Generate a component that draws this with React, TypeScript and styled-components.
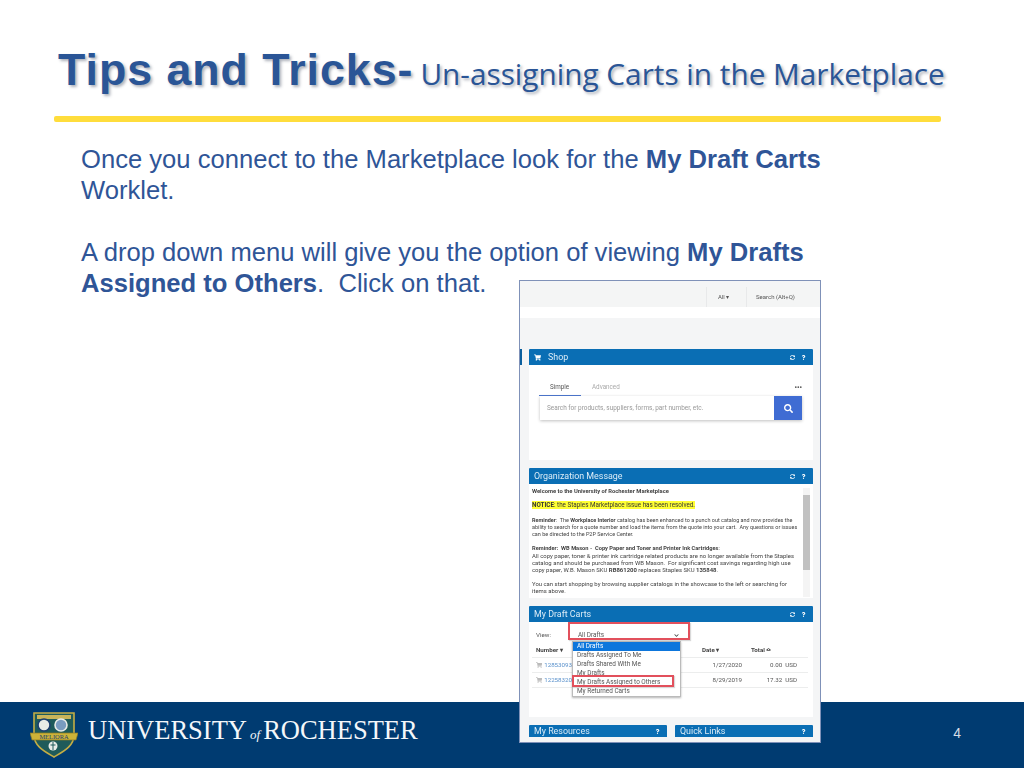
import React from "react";
import styled, { createGlobalStyle } from "styled-components";
import { FaShoppingCart, FaSearch, FaQuestion, FaSyncAlt, FaChevronDown } from "react-icons/fa";

const Global = createGlobalStyle`
  html, body { margin: 0; padding: 0; background: #fff; }
  * { box-sizing: border-box; }
`;

const Slide = styled.div`
  position: relative;
  width: 1024px;
  height: 768px;
  overflow: hidden;
  display: flex;
  flex-direction: column;
  background: #fff;
  font-family: "Liberation Sans", Arial, sans-serif;
`;

const Header = styled.header`
  height: 117px;
  padding: 45px 83px 0 54px;
`;

const TitleRow = styled.div`
  display: flex;
  align-items: baseline;
  height: 50px;
  padding-left: 4px;
  color: #2a5596;
  text-shadow: 2px 2px 3px rgba(60, 70, 90, 0.42);
  white-space: nowrap;
`;

const TitleBold = styled.span`
  font-size: 44.7px;
  letter-spacing: 1px;
  font-weight: 700;
`;

const TitleThin = styled.span`
  font-family: "Open Sans", sans-serif;
  font-size: 29.75px;
  margin-left: 7px;
`;

const Rule = styled.div`
  height: 6px;
  margin-top: 21px;
  border-radius: 2px;
  background: #ffdd3c;
`;

const Body = styled.main`
  flex: 1;
  padding: 27px 0 0 81px;
  font-size: 25.6px;
  line-height: 31px;
  color: #2f5597;
`;

const Para = styled.p`
  margin: 0 0 31px;
  width: 760px;
`;

const Footer = styled.footer`
  height: 66px;
  display: flex;
  align-items: center;
  padding: 0 63px 0 30px;
  background: #003b71;
  color: #fff;
`;

const Wordmark = styled.div`
  margin: 0 0 9px 10px;
  font-family: "Liberation Serif", serif;
  font-size: 26.5px;
  white-space: nowrap;
  color: #f4f7fa;
`;

const Of = styled.i`
  font-size: 13px;
  margin: 0 3px;
`;

const PageNumber = styled.div`
  margin: 0 0 4px auto;
  font-size: 14px;
  color: #d5dde6;
`;

/* the pasted browser screenshot, lying over the body and the footer */
const Shot = styled.div`
  position: absolute;
  left: 519px;
  top: 280px;
  width: 302px;
  height: 463px;
  border: 1.5px solid #7f91b8;
  background: #f4f5f6;
  overflow: hidden;
  font-family: Roboto, sans-serif;
  color: #333;
  filter: blur(0.35px);
`;

const EdgeTick = styled.div`
  position: absolute;
  left: 0;
  top: 68px;
  width: 1.5px;
  height: 16px;
  background: #0a5f9e;
`;

const TopBar = styled.div`
  height: 20px;
  margin-top: 6px;
  display: flex;
  justify-content: flex-end;
  background: #f4f5f5;
  font-size: 6px;
  line-height: 20px;
  color: #555;
`;

const TopCell = styled.div<{ $w: number; $pad: number }>`
  width: ${(p) => p.$w}px;
  padding-left: ${(p) => p.$pad}px;
  white-space: nowrap;
  border-left: 1px solid #e8e9ea;
`;

const WhiteStrip = styled.div`
  height: 11px;
  background: #fff;
`;

const Widgets = styled.div`
  padding: 31px 7px 0 9px;
  display: flex;
  flex-direction: column;
  gap: 8px;
`;

const Card = styled.section<{ $h: number }>`
  height: ${(p) => p.$h}px;
  background: #fff;
`;

const CardHead = styled.div<{ $h?: number }>`
  height: ${(p) => p.$h ?? 16}px;
  padding: 0 7px 0 5px;
  display: flex;
  align-items: center;
  background: #0a6eb4;
  color: #dcecf7;
  font-size: 8.9px;
  border-radius: 1px 1px 0 0;
`;

const HeadTitle = styled.span`
  flex: 1;
  white-space: nowrap;
`;

const HeadIcons = styled.span`
  display: flex;
  gap: 6px;
  align-items: center;
  font-size: 5px;
  color: #fff;
`;

const CartIcon = styled(FaShoppingCart)`
  margin-right: 7px;
  font-size: 7px;
  color: #fff;
`;

const Tabs = styled.div`
  display: flex;
  padding: 15px 11px 0 10px;
  height: 31px;
  font-size: 6.3px;
`;

const Tab = styled.div<{ $active?: boolean }>`
  width: 42px;
  padding-left: 11px;
  height: 16px;
  line-height: 14px;
  color: ${(p) => (p.$active ? "#555" : "#aaa")};
  border-bottom: ${(p) => (p.$active ? "1px solid #4a73c8" : "none")};
`;

const More = styled.div`
  margin-left: auto;
  font-size: 7px;
  line-height: 16px;
  font-weight: 700;
  color: #555;
`;

const SearchBox = styled.div`
  margin: 0 11px;
  height: 24px;
  display: flex;
  align-items: center;
  padding-left: 7px;
  font-size: 6.45px;
  white-space: nowrap;
  color: #999;
  box-shadow: 0 1px 3px rgba(0, 0, 0, 0.25);
`;

const SearchButton = styled.div`
  margin-left: auto;
  width: 28px;
  height: 24px;
  display: flex;
  align-items: center;
  justify-content: center;
  background: #3f6cd3;
  color: #fff;
  font-size: 9px;
`;

const Message = styled.div`
  position: relative;
  height: 114px;
  padding: 4px 14px 0 3px;
  line-height: 7px;
  color: #444;
`;

const MessageLine = styled.div<{ $gap?: number; $size?: number }>`
  margin-top: ${(p) => p.$gap ?? 0}px;
  font-size: ${(p) => p.$size ?? 5.47}px;
  white-space: nowrap;
`;

const Mark = styled.span`
  background: #ffff33;
  color: #333;
`;

const Scrollbar = styled.div`
  position: absolute;
  top: 4px;
  right: 3px;
  width: 7px;
  height: 109px;
  background: #f4f4f4;
`;

const Thumb = styled.div`
  margin-top: 7px;
  height: 75px;
  background: #c1c1c1;
`;

const DraftBody = styled.div`
  position: relative;
  height: 95px;
  padding-top: 5px;
  font-size: 6.2px;
  color: #555;
`;

const ViewRow = styled.div`
  display: flex;
  align-items: center;
  height: 16px;
  padding-left: 7px;
`;

const ViewSelect = styled.div`
  margin-left: 23px;
  width: 110px;
  height: 14px;
  display: flex;
  align-items: center;
  justify-content: space-between;
  padding: 0 5px 0 4px;
  font-size: 6.4px;
  background: #fff;
`;

const RedBox = styled.div<{ $l: number; $t: number; $w: number; $h: number }>`
  position: absolute;
  left: ${(p) => p.$l}px;
  top: ${(p) => p.$t}px;
  width: ${(p) => p.$w}px;
  height: ${(p) => p.$h}px;
  border: 2px solid #e2505c;
  box-shadow: 1px 1px 1px rgba(0, 0, 0, 0.15);
  z-index: 3;
`;

const Row = styled.div`
  display: grid;
  grid-template-columns: 166px 40px 55px;
  align-items: center;
  height: 15px;
  margin: 0 5px 0 3px;
  padding-left: 4px;
  border-bottom: 1px solid #eceded;
`;

const HeadCell = styled.div<{ $pad?: number }>`
  padding-left: ${(p) => p.$pad ?? 0}px;
  font-weight: 700;
  color: #444;
  white-space: nowrap;
`;

const NumberCell = styled.div`
  display: flex;
  align-items: center;
  gap: 2px;
  color: #5b92cc;
`;

const RowCart = styled(FaShoppingCart)`
  color: #bbb;
`;

const RightCell = styled.div`
  text-align: right;
  white-space: nowrap;
`;

const Menu = styled.div`
  position: absolute;
  left: 43px;
  top: 19px;
  width: 109px;
  background: #fff;
  border: 1px solid #bbb;
  box-shadow: 0 1px 2px rgba(0, 0, 0, 0.3);
  font-size: 6.4px;
  line-height: 9px;
  z-index: 2;
`;

const MenuItem = styled.div<{ $on?: boolean }>`
  padding-left: 4px;
  height: 9px;
  white-space: nowrap;
  background: ${(p) => (p.$on ? "#0d76dc" : "#fff")};
  color: ${(p) => (p.$on ? "#fff" : "#555")};
`;

const Chevron = styled(FaChevronDown)`
  font-size: 5px;
  color: #444;
`;

const Pair = styled.div`
  display: grid;
  grid-template-columns: 138px 138px;
  gap: 8px;
`;

const Crest = () => (
  <svg width="48" height="48" viewBox="0 0 48 48">
    <path d="M4 2h40v22c0 11-10 16-20 22C14 40 4 35 4 24z" fill="#1f5b5a" stroke="#c4ad45" strokeWidth="1.6" />
    <rect x="7" y="4" width="34" height="4" fill="#c9b45a" />
    <circle cx="14" cy="14" r="6" fill="#e8ebe6" stroke="#1d3f6e" strokeWidth="1.6" />
    <circle cx="31" cy="14" r="6" fill="#7a9cc0" stroke="#e8ebe6" strokeWidth="1.6" />
    <path d="M0 22l5 0h38l5 0-2 7H2z" fill="#cdb338" stroke="#8a7a24" strokeWidth=".7" />
    <text x="24" y="27.5" textAnchor="middle" fontSize="6.4" fontFamily="Liberation Serif, serif" fill="#23406e">MELIORA</text>
    <circle cx="23" cy="35" r="4.5" fill="#e8ece8" />
    <path d="M23 31v8M20.5 34h5" stroke="#1f5b5a" strokeWidth="1" />
  </svg>
);

const HeadActions = ({ refresh = true }: { refresh?: boolean }) => (
  <HeadIcons>
    {refresh && <FaSyncAlt />}
    <FaQuestion />
  </HeadIcons>
);

export default function App() {
  return (
    <Slide>
      <Global />
      <Header>
        <TitleRow>
          <TitleBold>Tips and Tricks-</TitleBold>
          <TitleThin>Un-assigning Carts in the Marketplace</TitleThin>
        </TitleRow>
        <Rule />
      </Header>
      <Body>
        <Para>
          Once you connect to the Marketplace look for the <b>My Draft Carts</b> Worklet.
        </Para>
        <Para>
          A drop down menu will give you the option of viewing <b>My Drafts Assigned to Others</b>.&nbsp; Click on that.
        </Para>
      </Body>
      <Footer>
        <Crest />
        <Wordmark>
          UNIVERSITY<Of>of</Of>ROCHESTER
        </Wordmark>
        <PageNumber>4</PageNumber>
      </Footer>
      <Shot>
        <EdgeTick />
        <TopBar>
          <TopCell $w={40} $pad={11}>All ▾</TopCell>
          <TopCell $w={74} $pad={9}>Search (Alt+Q)</TopCell>
        </TopBar>
        <WhiteStrip />
        <Widgets>
          <Card $h={111}>
            <CardHead>
              <CartIcon />
              <HeadTitle>Shop</HeadTitle>
              <HeadActions />
            </CardHead>
            <Tabs>
              <Tab $active>Simple</Tab>
              <Tab>Advanced</Tab>
              <More>•••</More>
            </Tabs>
            <SearchBox>
              Search for products, suppliers, forms, part number, etc.
              <SearchButton>
                <FaSearch />
              </SearchButton>
            </SearchBox>
          </Card>
          <Card $h={130}>
            <CardHead>
              <HeadTitle>Organization Message</HeadTitle>
              <HeadActions />
            </CardHead>
            <Message>
              <MessageLine $size={5.8}><b>Welcome to the University of Rochester Marketplace</b></MessageLine>
              <MessageLine $gap={7} $size={6.3}><Mark><b>NOTICE</b>: the Staples Marketplace issue has been resolved.</Mark></MessageLine>
              <MessageLine $gap={8}><b>Reminder</b>:&nbsp; The <b>Workplace Interior</b> catalog has been enhanced to a punch out catalog and now provides the</MessageLine>
              <MessageLine>ability to search for a quote number and load the items from the quote into your cart.&nbsp; Any questions or issues</MessageLine>
              <MessageLine>can be directed to the P2P Service Center.</MessageLine>
              <MessageLine $gap={7} $size={5.7}><b>Reminder:&nbsp; WB Mason -&nbsp; Copy Paper and Toner and Printer Ink Cartridges</b>:</MessageLine>
              <MessageLine $size={5.94}>All copy paper, toner &amp; printer ink cartridge related products are no longer available from the Staples</MessageLine>
              <MessageLine $size={5.94}>catalog and should be purchased from WB Mason.&nbsp; For significant cost savings regarding high use</MessageLine>
              <MessageLine $size={5.94}>copy paper, W.B. Mason SKU <b>RB861200</b> replaces Staples SKU <b>135848</b>.</MessageLine>
              <MessageLine $gap={7} $size={5.94}>You can start shopping by browsing supplier catalogs in the showcase to the left or searching for</MessageLine>
              <MessageLine $size={5.94}>items above.</MessageLine>
              <Scrollbar><Thumb /></Scrollbar>
            </Message>
          </Card>
          <Card $h={111}>
            <CardHead>
              <HeadTitle>My Draft Carts</HeadTitle>
              <HeadActions />
            </CardHead>
            <DraftBody>
              <ViewRow>
                View:
                <ViewSelect>
                  All Drafts
                  <Chevron />
                </ViewSelect>
              </ViewRow>
              <RedBox $l={39} $t={0} $w={122} $h={18} />
              <Row>
                <HeadCell>Number ▾</HeadCell>
                <HeadCell>Date ▾</HeadCell>
                <HeadCell $pad={9}>Total ≏</HeadCell>
              </Row>
              <Row>
                <NumberCell><RowCart />12853093</NumberCell>
                <RightCell>1/27/2020</RightCell>
                <RightCell>0.00 &nbsp;USD</RightCell>
              </Row>
              <Row>
                <NumberCell><RowCart />12258320</NumberCell>
                <RightCell>8/29/2019</RightCell>
                <RightCell>17.32 &nbsp;USD</RightCell>
              </Row>
              <Menu>
                <MenuItem $on>All Drafts</MenuItem>
                <MenuItem>Drafts Assigned To Me</MenuItem>
                <MenuItem>Drafts Shared With Me</MenuItem>
                <MenuItem>My Drafts</MenuItem>
                <MenuItem>My Drafts Assigned to Others</MenuItem>
                <MenuItem>My Returned Carts</MenuItem>
              </Menu>
              <RedBox $l={43} $t={53} $w={102} $h={12} />
            </DraftBody>
          </Card>
          <Pair>
            <Card $h={12}>
              <CardHead $h={12}>
                <HeadTitle>My Resources</HeadTitle>
                <HeadActions refresh={false} />
              </CardHead>
            </Card>
            <Card $h={12}>
              <CardHead $h={12}>
                <HeadTitle>Quick Links</HeadTitle>
                <HeadActions refresh={false} />
              </CardHead>
            </Card>
          </Pair>
        </Widgets>
      </Shot>
    </Slide>
  );
}
